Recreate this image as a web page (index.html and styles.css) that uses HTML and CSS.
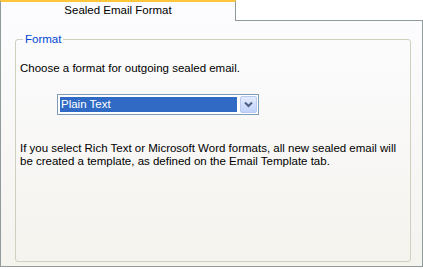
FILE: index.html
```html
<!DOCTYPE html>
<html>
<head>
    <meta charset="utf-8"/>
    <title>Sealed Email Format</title>
    <link rel="stylesheet" href="styles.css">
</head>
<body>
<div class="tabs">
    <div class="tab-row">
        <div class="tab active">Sealed Email Format</div>
    </div>
    <div class="panel">
        <fieldset class="group">
            <legend>Format</legend>
            <p class="intro">Choose a format for outgoing sealed email.</p>
            <div class="combo">
                <div class="combo-value">Plain Text</div>
                <div class="combo-btn">
                    <svg width="9" height="7" viewBox="0 0 9 7">
                        <path d="M1 1.5 L4.5 5 L8 1.5" fill="none" stroke="#4d6185" stroke-width="2"/>
                    </svg>
                </div>
            </div>
            <p class="note">If you select Rich Text or Microsoft Word formats, all new sealed email will be created a template, as defined on the Email Template tab.</p>
        </fieldset>
    </div>
</div>
</body>
</html>
```

FILE: styles.css
```css
body {
    margin: 0;
    background: #fff;
    font-family: "Liberation Sans", "DejaVu Sans", sans-serif;
    font-size: 11.5px;
    color: #000;
}

.tabs {
    width: 423px;
}

.tab-row {
    display: flex;
    height: 20px;
}

.tab {
    width: 236px;
    border: 1px solid #919b9c;
    border-top: 2px solid #ffc83c;
    border-bottom: none;
    background: #fcfcfe;
    text-align: center;
    line-height: 17px;
    box-sizing: border-box;
    height: 21px;
    position: relative;
    z-index: 1;
}

.panel {
    border: 1px solid #919b9c;
    height: 245px;
    background: linear-gradient(#fcfcfe, #f4f3ee);
    display: flex;
    flex-direction: column;
}

.group {
    margin: 12px 11px 4px 14px;
    padding: 4px 4px 0 4px;
    border: 1px solid #d0d0bf;
    border-radius: 3px;
    flex: 1;
}

.group legend {
    color: #0046d5;
    padding: 0 2px;
    margin-left: 3px;
}

.intro {
    margin: 13px 0 0 0;
}

.combo {
    display: flex;
    width: 200px;
    height: 19px;
    margin: 20px 0 0 37px;
    border: 1px solid #7f9db9;
    background: #fff;
}

.combo-value {
    flex: 1;
    margin: 2px 3px 2px 2px;
    background: #316ac5;
    color: #fff;
    line-height: 15px;
    padding-left: 1px;
}

.combo-btn {
    width: 17px;
    margin: 1px 1px 1px 0;
    box-sizing: border-box;
    border: 1px solid #b9c9ef;
    border-radius: 2px;
    background: linear-gradient(#e3ebfd, #c1d3fb);
    display: flex;
    align-items: center;
    justify-content: center;
}

.note {
    margin: 27px 0 0 0;
    line-height: 13px;
}
```
